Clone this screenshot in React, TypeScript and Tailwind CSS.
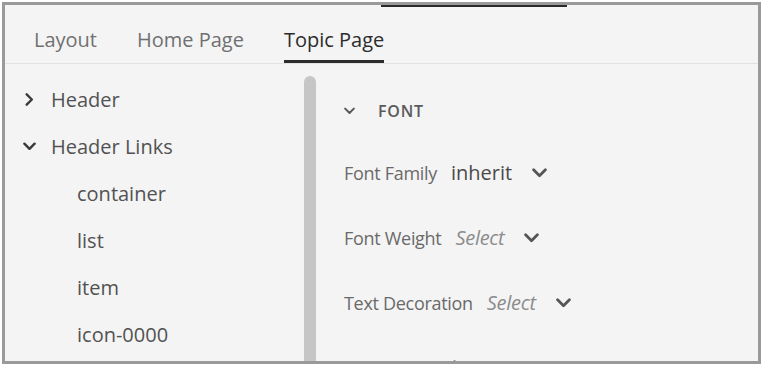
const font = { fontFamily: '"Open Sans", "Noto Sans", sans-serif' }

const tabs = ["Layout", "Home Page", "Topic Page"]

const tree = [
  { label: "Header", depth: 0, open: false },
  { label: "Header Links", depth: 0, open: true },
  { label: "container", depth: 1 },
  { label: "list", depth: 1 },
  { label: "item", depth: 1 },
  { label: "icon-0000", depth: 1 },
]

const props = [
  { label: "Font Family", value: "inherit", placeholder: false },
  { label: "Font Weight", value: "Select", placeholder: true },
  { label: "Text Decoration", value: "Select", placeholder: true },
  { label: "Font Size", value: "Select", placeholder: true },
]

function Down({ className = "" }: { className?: string }) {
  return (
    <svg viewBox="0 0 14 9" className={className} fill="none">
      <polyline points="1.5,1.5 7,7 12.5,1.5" stroke="currentColor" strokeWidth="2.6" strokeLinecap="round" strokeLinejoin="round" />
    </svg>
  )
}

function Right({ className = "" }: { className?: string }) {
  return (
    <svg viewBox="0 0 9 14" className={className} fill="none">
      <polyline points="1.5,1.5 7,7 1.5,12.5" stroke="currentColor" strokeWidth="2.6" strokeLinecap="round" strokeLinejoin="round" />
    </svg>
  )
}

export default function App() {
  return (
    <div className="w-[764px] h-[366px] bg-white p-[2px]" style={font}>
      <div className="w-[759px] h-[362px] border-[3px] border-[#9a9a9a] bg-[#f4f4f4] overflow-hidden flex flex-col">
        {/* top strip */}
        <div className="h-[2px] flex">
          <div className="ml-[376px] w-[186px] h-[2px] bg-[#2a2a2a]" />
        </div>

        {/* tabs */}
        <div className="h-[57px] flex items-end gap-[40px] pl-[29px] border-b border-[#e2e2e2] shrink-0">
          {tabs.map((t) => {
            const active = t === "Topic Page"
            return (
              <div
                key={t}
                className={`text-[20px] leading-[26px] ${
                  active
                    ? "text-[#2c2c2c] border-b-[3px] border-[#2c2c2c] pb-[7px]"
                    : "text-[#707070] pb-[10px]"
                }`}
              >
                {t}
              </div>
            )
          })}
        </div>

        {/* body */}
        <div className="flex flex-1 min-h-0">
          <div className="w-[299px] pt-[12px] pl-[17px] shrink-0">
            {tree.map((n) => (
              <div key={n.label} className="h-[47px] flex items-center text-[20px] text-[#525252]">
                {n.depth === 0 ? (
                  <>
                    <span className="w-[14px] flex justify-center text-[#3a3a3a]">
                      {n.open ? <Down className="w-[13px] h-[9px]" /> : <Right className="w-[9px] h-[13px]" />}
                    </span>
                    <span className="ml-[15px]">{n.label}</span>
                  </>
                ) : (
                  <span className="ml-[55px]">{n.label}</span>
                )}
              </div>
            ))}
          </div>

          <div className="w-[12px] mt-[12px] rounded-t-full bg-[#c6c6c6] shrink-0" />

          <div className="flex-1 pl-[28px] pt-[36px]">
            <div className="flex items-center h-[22px] text-[#5a5a5a]">
              <Down className="w-[11px] h-[8px]" />
              <span className="ml-[23px] text-[16px] font-semibold tracking-[0.8px]">FONT</span>
            </div>
            <div className="mt-[38px] flex flex-col gap-[39px]">
              {props.map((p) => (
                <div key={p.label} className="flex items-center h-[26px]">
                  <span className="text-[18px] text-[#6a6a6a] tracking-[-0.3px]">{p.label}</span>
                  <span
                    className={`ml-[14px] ${
                      p.placeholder
                        ? "italic text-[20px] text-[#8c8c8c] tracking-[-0.3px]"
                        : "text-[20px] text-[#4a4a4a]"
                    }`}
                  >
                    {p.value}
                  </span>
                  <Down className="ml-[20px] w-[15px] h-[10px] text-[#555]" />
                </div>
              ))}
            </div>
          </div>
        </div>
      </div>
    </div>
  )
}
